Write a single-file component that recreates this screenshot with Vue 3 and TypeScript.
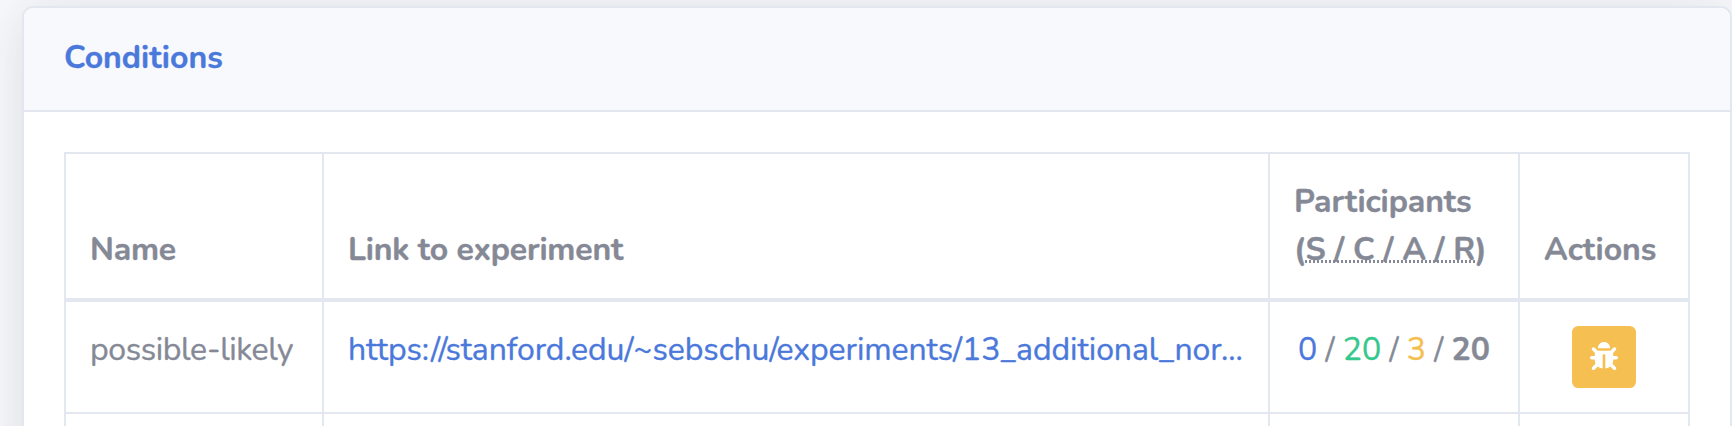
<script setup lang="ts">
interface Condition {
  name: string
  url: string
  started: number
  completed: number
  aborted: number
  requested: number
}

const conditions: Condition[] = [
  {
    name: 'possible-likely',
    url: 'https://stanford.edu/~sebschu/experiments/13_additional_nor...',
    started: 0,
    completed: 20,
    aborted: 3,
    requested: 20,
  },
]
</script>

<template>
  <main class="page">
    <section class="card">
      <header class="card-header">
        <h6 class="title">Conditions</h6>
      </header>
      <div class="card-body">
        <table class="table">
          <colgroup>
            <col class="col-name" />
            <col class="col-link" />
            <col class="col-participants" />
            <col class="col-actions" />
          </colgroup>
          <thead>
            <tr>
              <th><span class="h-name">Name</span></th>
              <th><span class="h-link">Link to experiment</span></th>
              <th>
                <span class="h-part">Participants</span><br />
                (<abbr>S / C / A / R</abbr>)
              </th>
              <th>Actions</th>
            </tr>
          </thead>
          <tbody>
            <tr v-for="c in conditions" :key="c.name">
              <td><span class="name">{{ c.name }}</span></td>
              <td><a class="link">{{ c.url }}</a></td>
              <td class="counts">
                <span class="primary">{{ c.started }}</span> / <span class="success">{{ c.completed }}</span> / <span class="warning">{{ c.aborted }}</span> / <b>{{ c.requested }}</b>
              </td>
              <td class="actions">
                <button class="btn" type="button" aria-label="Debug">
                  <svg viewBox="0 0 512 512" width="28" height="28" fill="currentColor">
                    <path d="M511.988 288.9c-.478 17.43-15.217 31.1-32.653 31.1H424v16c0 21.864-4.882 42.584-13.6 61.145l60.228 60.228c12.496 12.497 12.496 32.758 0 45.255-12.498 12.497-32.759 12.496-45.256 0l-54.736-54.736C345.886 467.965 314.351 480 280 480V236c0-6.627-5.373-12-12-12h-24c-6.627 0-12 5.373-12 12v244c-34.351 0-65.886-12.035-90.636-32.108l-54.736 54.736c-12.498 12.497-32.759 12.496-45.256 0-12.496-12.497-12.496-32.758 0-45.255l60.228-60.228C92.882 378.584 88 357.864 88 336v-16H32.666C15.23 320 .491 306.33.013 288.9-.484 270.816 14.028 256 32 256h56v-58.745l-46.628-46.628c-12.496-12.497-12.496-32.758 0-45.255 12.498-12.497 32.758-12.497 45.256 0L141.255 160h229.489l54.627-54.627c12.498-12.497 32.758-12.497 45.256 0 12.496 12.497 12.496 32.758 0 45.255L424 197.255V256h56c17.972 0 32.484 14.816 31.988 32.9zM257 0c-61.856 0-112 50.144-112 112h224C369 50.144 318.856 0 257 0z" />
                  </svg>
                </button>
              </td>
            </tr>
            <tr class="blank">
              <td></td>
              <td></td>
              <td></td>
              <td></td>
            </tr>
          </tbody>
        </table>
      </div>
    </section>
  </main>
</template>

<style>
body {
  margin: 0;
  overflow: hidden;
  background: #f8f9fc;
}
</style>

<style scoped>
.page {
  box-sizing: border-box;
  height: 426px;
  padding: 6px 0 0 22px;
  overflow: hidden;
  background: #f8f9fc;
  color: #858996;
  font-family: Nunito, Lato, sans-serif;
  font-size: 32px;
  font-weight: 400;
  line-height: 48px;
  -webkit-text-stroke: 0.35px currentColor;
}
.card {
  box-sizing: border-box;
  width: 1710px;
  height: 620px;
  border: 2px solid #e2e7f0;
  border-radius: 11.2px;
  background: #fff;
  box-shadow: 0 4.8px 56px rgba(58, 59, 69, 0.15);
}
.card-header {
  box-sizing: border-box;
  height: 104px;
  padding: 26px 40px 0;
  border-bottom: 2px solid #e2e7f0;
  border-radius: 9.2px 9.2px 0 0;
  background: #f8f9fd;
}
.title {
  margin: 0;
  color: #4a78db;
  font-size: 32px;
  font-weight: 700;
  line-height: 48px;
}
.card-body {
  padding: 40px;
}
.table {
  width: 1626px;
  table-layout: fixed;
  border-collapse: collapse;
}
.col-name { width: 258px; }
.col-link { width: 946px; }
.col-participants { width: 250px; }
.col-actions { width: 170px; }
th,
td {
  padding: 24px;
  border: 2px solid #e2e7f0;
  text-align: left;
  vertical-align: top;
  white-space: nowrap;
}
th {
  border-bottom-width: 4px;
  font-weight: 700;
  vertical-align: bottom;
}
.h-name { letter-spacing: -0.25px; }
.h-link { letter-spacing: -0.18px; }
.h-part { letter-spacing: -0.08px; }
.name { letter-spacing: -0.38px; }
.link { letter-spacing: -0.075px; }
.link,
.primary {
  color: #4a78db;
}
.success { color: #34c88c; }
.warning { color: #f5bf50; }
abbr {
  background: repeating-linear-gradient(90deg, currentColor 0 2px, transparent 2px 4px) 0 32px / 100% 3px no-repeat;
}
.counts,
.actions {
  text-align: center;
}
.btn {
  display: flex;
  align-items: center;
  justify-content: center;
  width: 64px;
  height: 62px;
  margin: 0 auto;
  padding: 0 0 3px;
  border: 0;
  border-radius: 6.4px;
  background: #f5bf52;
  color: #fff;
}
.blank td { height: 64px; }
</style>
